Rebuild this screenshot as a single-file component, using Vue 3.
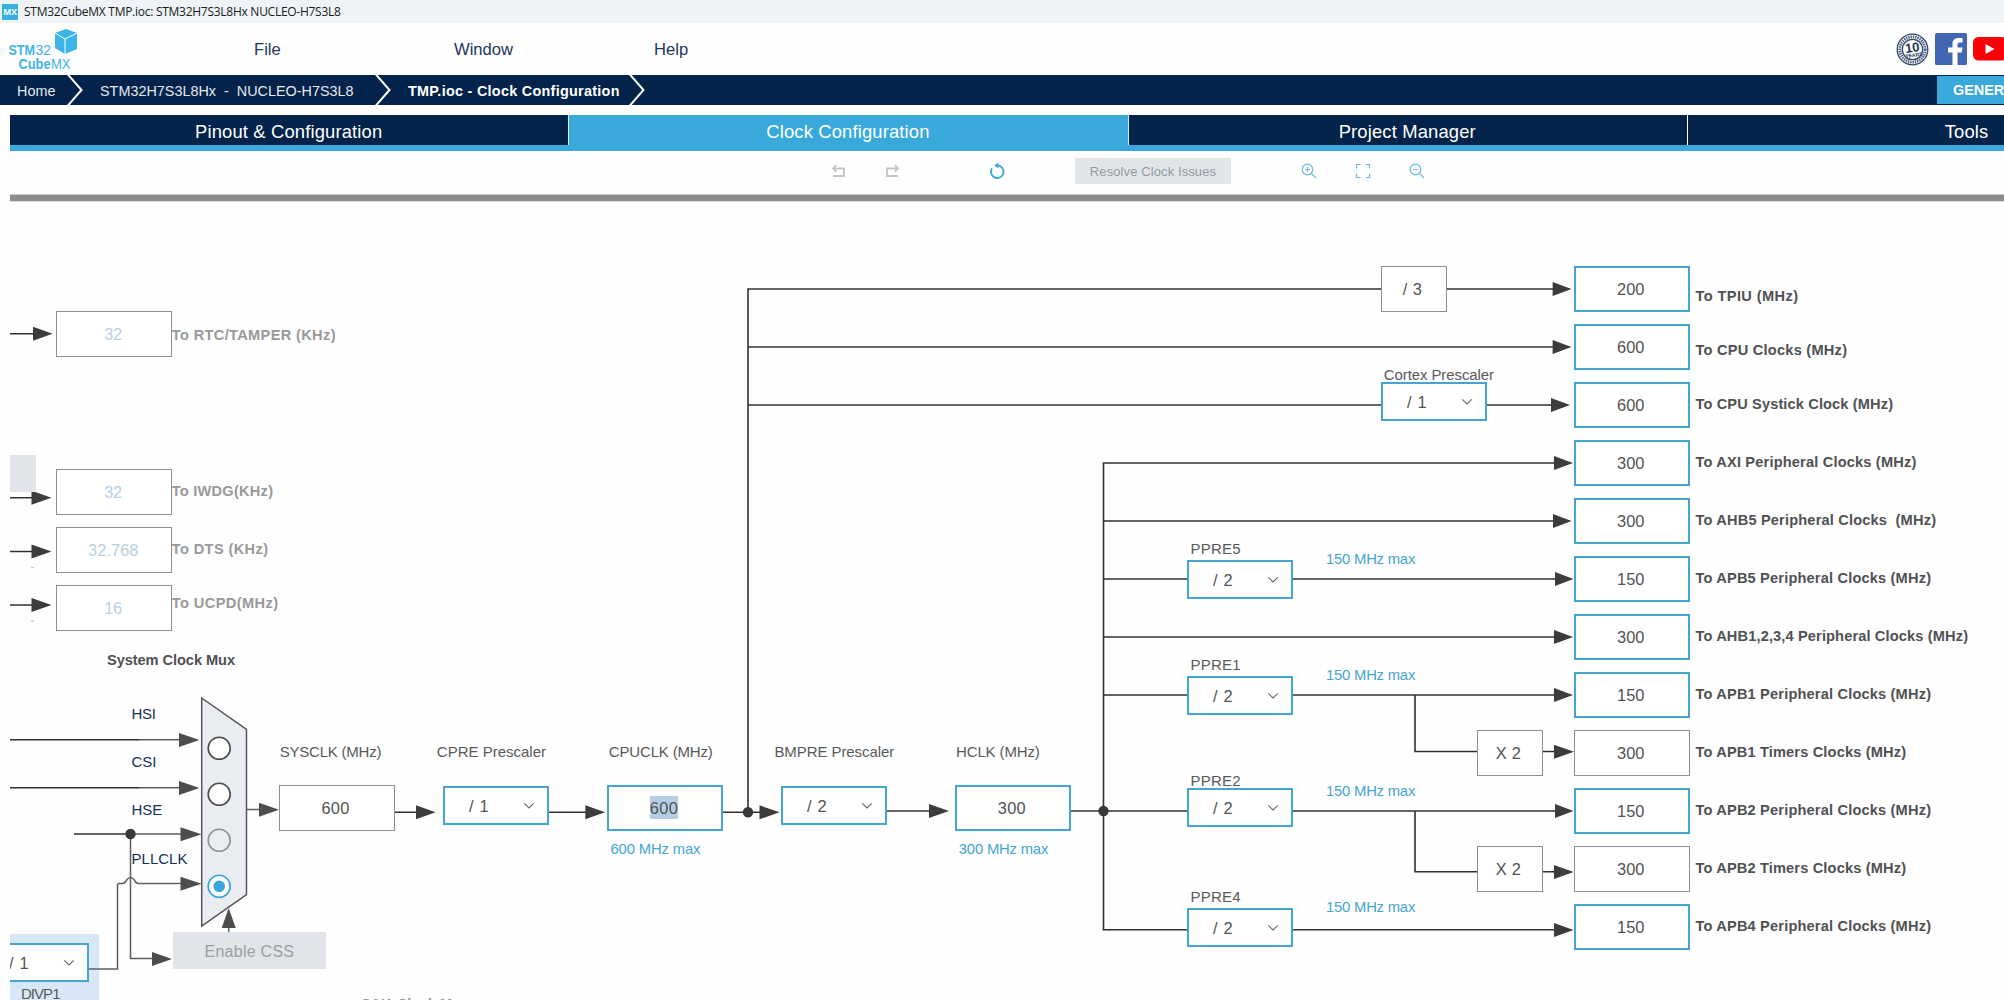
<script setup>
const tabs = [
  { name: 'Pinout & Configuration' },
  { name: 'Clock Configuration', active: true },
  { name: 'Project Manager' },
  { name: 'Tools' },
]

// Value fields: x, y, text, state, baseline offset
const outputs = [
  ['200', 266, 'on'], ['600', 324, 'on'], ['600', 382, 'on'], ['300', 440, 'on'],
  ['300', 498, 'on'], ['150', 556, 'on'], ['300', 614, 'on'], ['150', 672, 'on'],
  ['300', 730, 'off'], ['150', 788, 'on'], ['300', 846, 'off'], ['150', 904, 'on'],
].map(([text, y, kind]) => ({ text, y, kind, x: 1574, w: 116, tw: 27.4, tx: 1630.7, by: y + 29.4 }))

const fields = [
  { x: 56, y: 311, w: 116, text: '32', tx: 113.2, by: 340, tw: 18, kind: 'off', dim: true },
  { x: 56, y: 469, w: 116, text: '32', tx: 113.2, by: 498, tw: 18, kind: 'off', dim: true },
  { x: 56, y: 527, w: 116, text: '32.768', tx: 113.2, by: 556, tw: 50.5, kind: 'off', dim: true },
  { x: 56, y: 585, w: 116, text: '16', tx: 113.2, by: 614, tw: 18, kind: 'off', dim: true },
  { x: 279, y: 785, w: 116, text: '600', tx: 335.4, by: 813.7, tw: 28, kind: 'off' },
  { x: 607, y: 785, w: 116, text: '600', tx: 663.8, by: 813.7, tw: 28, kind: 'on', selected: true },
  { x: 955, y: 785, w: 116, text: '300', tx: 1011.7, by: 813.8, tw: 28, kind: 'on' },
  { x: 1381, y: 266, w: 66, text: '/ 3', tx: 1412.3, by: 295.3, tw: 19, kind: 'off' },
  { x: 1477, y: 730, w: 66, text: 'X 2', tx: 1508.3, by: 759, tw: 25, kind: 'off' },
  { x: 1477, y: 846, w: 66, text: 'X 2', tx: 1508.3, by: 875, tw: 25, kind: 'off' },
  ...outputs,
]

const selects = [
  { x: 443, y: 786, text: '/ 1' },
  { x: 781, y: 786, text: '/ 2' },
  { x: 1381, y: 382, text: '/ 1' },
  { x: 1187, y: 560, text: '/ 2' },
  { x: 1187, y: 676, text: '/ 2' },
  { x: 1187, y: 788, text: '/ 2' },
  { x: 1187, y: 908, text: '/ 2' },
  { x: -17, y: 943, text: '/ 1' },
]

// Labels: text, left, right, baseline, style
const labels = [
  ['To RTC/TAMPER (KHz)', 171.8, 335.5, 340.3, 'bold dim'],
  ['To IWDG(KHz)', 171.8, 273, 496.2, 'bold dim'],
  ['To DTS (KHz)', 171.8, 268, 554.3, 'bold dim'],
  ['To UCPD(MHz)', 171.8, 278, 608.2, 'bold dim'],
  ['System Clock Mux', 107, 235, 665.3, 'bold'],
  ['HSI', 131.5, 156, 719, 'navy'],
  ['CSI', 131.5, 156.5, 767, 'navy'],
  ['HSE', 131.5, 162.3, 815, 'navy'],
  ['PLLCLK', 131.5, 187.5, 863.8, 'navy'],
  ['SYSCLK (MHz)', 279.7, 381.5, 757, ''],
  ['CPRE Prescaler', 436.8, 546, 757, ''],
  ['CPUCLK (MHz)', 608.8, 712.8, 757, ''],
  ['BMPRE Prescaler', 774.4, 894.2, 757, ''],
  ['HCLK (MHz)', 956, 1039.8, 757, ''],
  ['600 MHz max', 610.5, 700.5, 854, 'blue'],
  ['300 MHz max', 958.8, 1048.3, 854, 'blue'],
  ['Cortex Prescaler', 1383.8, 1494, 380, ''],
  ['PPRE5', 1190.5, 1240.5, 554.3, ''],
  ['PPRE1', 1190.5, 1240.5, 670.3, ''],
  ['PPRE2', 1190.5, 1240.5, 786.3, ''],
  ['PPRE4', 1190.5, 1240.5, 902.3, ''],
  ['150 MHz max', 1326, 1415.3, 564.4, 'blue'],
  ['150 MHz max', 1326, 1415.3, 680.4, 'blue'],
  ['150 MHz max', 1326, 1415.3, 796.4, 'blue'],
  ['150 MHz max', 1326, 1415.3, 912.4, 'blue'],
  ['To TPIU (MHz)', 1695.5, 1798, 301.3, 'bold'],
  ['To CPU Clocks (MHz)', 1695.5, 1847, 355.3, 'bold'],
  ['To CPU Systick Clock (MHz)', 1695.5, 1893, 409.3, 'bold'],
  ['To AXI Peripheral Clocks (MHz)', 1695.5, 1916.3, 467.3, 'bold'],
  ['To AHB5 Peripheral Clocks\u00a0 (MHz)', 1695.5, 1936, 525.3, 'bold'],
  ['To APB5 Peripheral Clocks (MHz)', 1695.5, 1931, 583.3, 'bold'],
  ['To AHB1,2,3,4 Peripheral Clocks (MHz)', 1695.5, 1968, 641.3, 'bold'],
  ['To APB1 Peripheral Clocks (MHz)', 1695.5, 1931, 699.3, 'bold'],
  ['To APB1 Timers Clocks (MHz)', 1695.5, 1906, 757.3, 'bold'],
  ['To APB2 Peripheral Clocks (MHz)', 1695.5, 1931, 815.3, 'bold'],
  ['To APB2 Timers Clocks (MHz)', 1695.5, 1906, 873.3, 'bold'],
  ['To APB4 Peripheral Clocks (MHz)', 1695.5, 1931, 931.3, 'bold'],
  ['DIVP1', 21, 60.5, 998.5, ''],
  ['SAI1 Clock Mux', 361, 469, 1008.7, 'bold dim'],
]

// Right-pointing arrow heads: base x, y, tip x
const heads = [
  [33, 333.7, 52.5], [31.5, 497.7, 51.5], [31.5, 551.5, 51.5], [31.5, 605, 51.5],
  [416, 812.3, 435.5], [585.3, 812.3, 605], [759.5, 812.3, 779.5], [929, 811, 949],
  [1552.6, 289, 1571.5], [1552.6, 347, 1571.5], [1551, 405, 1570],
  [1554, 463, 1573], [1553, 521, 1571.5], [1555, 579, 1573.5], [1554, 637, 1573],
  [1554, 695, 1573], [1554, 751.7, 1574], [1555, 811, 1573.5], [1554, 872, 1573.5], [1554, 930, 1573.5],
]
const greyHeads = [
  [179, 740, 199.5], [179, 788, 199.5], [180.5, 834.3, 201.5], [180.5, 883.7, 201.5],
  [259, 809.7, 279], [152, 959, 172],
]
const headPoints = ([x, y, tip]) => `${x},${y - 7} ${tip},${y} ${x},${y + 7}`
</script>

<template>
  <div class="app">
    <header class="titlebar">
      <span class="mx">MX</span>
      <span class="title">STM32CubeMX TMP.ioc: STM32H7S3L8Hx NUCLEO-H7S3L8</span>
    </header>

    <nav class="menu">
      <svg class="logo" width="84" height="52" viewBox="0 0 84 52">
        <path class="cube" d="M66 6 L77 10 V26 L65 31 L55 25 V10 Z" />
        <path class="cube-edge" d="M55 10 L65 16 L77 10 M65 16 V31" />
        <text x="8.500" y="31.500" class="lb" textLength="26.500" lengthAdjust="spacingAndGlyphs">STM</text>
        <text x="35.500" y="31.500" class="ln" textLength="15.500" lengthAdjust="spacingAndGlyphs">32</text>
        <text x="18.500" y="46" class="lb" textLength="32" lengthAdjust="spacingAndGlyphs">Cube</text>
        <text x="51" y="46" class="ln" textLength="19.500" lengthAdjust="spacingAndGlyphs">MX</text>
      </svg>
      <span class="item file">File</span>
      <span class="item window">Window</span>
      <span class="item help">Help</span>
      <div class="social">
        <svg width="33" height="33" viewBox="0 0 33 33">
          <circle cx="16.500" cy="16.500" r="15.300" class="ring" />
          <circle cx="16.500" cy="16.500" r="12.700" class="ring-dash" />
          <circle cx="16.500" cy="16.500" r="10.200" class="ring" />
          <text x="16.500" y="19" class="ten" text-anchor="middle" transform="rotate(-8 16.500 16.500)">10</text>
          <text x="17" y="24" class="years" text-anchor="middle" transform="rotate(-8 16.500 16.500)">YEARS</text>
        </svg>
        <svg width="32" height="32" viewBox="0 0 32 32">
          <rect width="32" height="32" rx="1.500" fill="#4267b2" />
          <path fill="#fff" d="M17.500 32 V19.500 H13 V14.500 H17.500 V11 C17.500 7 20 5 23.500 5 H27.500 V9.500 H25 C23 9.500 22.500 10.500 22.500 12 V14.500 H27.500 L26.800 19.500 H22.500 V32 Z" />
        </svg>
        <svg width="34" height="24" viewBox="0 0 34 24">
          <rect width="34" height="23.500" rx="5.500" fill="#fb0007" />
          <path fill="#fff" d="M12.500 7 L21.500 12 L12.500 17 Z" />
        </svg>
      </div>
    </nav>

    <div class="crumbs">
      <span class="crumb home">Home</span>
      <svg class="sep" width="18" height="30" viewBox="0 0 18 30"><path d="M1.500 -1 L15.500 15 L1.500 31" /></svg>
      <span class="crumb board">STM32H7S3L8Hx&nbsp; -&nbsp; NUCLEO-H7S3L8</span>
      <svg class="sep" width="18" height="30" viewBox="0 0 18 30"><path d="M1.500 -1 L15.500 15 L1.500 31" /></svg>
      <span class="crumb current">TMP.ioc - Clock Configuration</span>
      <svg class="sep" width="18" height="30" viewBox="0 0 18 30"><path d="M1.500 -1 L15.500 15 L1.500 31" /></svg>
      <div class="generate">GENERATE CODE</div>
    </div>

    <div class="tabs">
      <div v-for="t in tabs" :key="t.name" class="tab" :class="{ active: t.active }">{{ t.name }}</div>
    </div>

    <div class="toolbar">
      <svg class="tool grey undo" width="14" height="14" viewBox="0 0 14 14"><path d="M1 4.500 H12 V12 H1 M4.200 1.200 L1 4.500 L4.200 7.800" /></svg>
      <svg class="tool grey redo" width="14" height="14" viewBox="0 0 14 14"><path d="M13 4.500 H2 V12 H13 M9.800 1.200 L13 4.500 L9.800 7.800" /></svg>
      <svg class="tool refresh" width="16" height="18" viewBox="0 0 16 18"><path d="M2 6.200 A6.300 6.300 0 1 0 7 3.400 H5" /><path class="tip" d="M4.600 3.400 L8.300 0.600 V6.200 Z" /></svg>
      <div class="resolve">Resolve Clock Issues</div>
      <svg class="tool thin zin" width="16" height="16" viewBox="0 0 16 16"><circle cx="6.500" cy="6.500" r="5.300" /><path d="M10.300 10.300 L15 15 M4 6.500 H9 M6.500 4 V9" /></svg>
      <svg class="tool thin fit" width="16" height="16" viewBox="0 0 16 16"><path d="M1.500 5.500 V1.500 H5.500 M10.500 1.500 H14.500 V5.500 M14.500 10.500 V14.500 H10.500 M5.500 14.500 H1.500 V10.500" /></svg>
      <svg class="tool thin zout" width="16" height="16" viewBox="0 0 16 16"><circle cx="6.500" cy="6.500" r="5.300" /><path d="M10.300 10.300 L15 15 M4 6.500 H9" /></svg>
    </div>

    <main class="canvas">
      <svg width="2004" height="798" viewBox="0 202 2004 798">
        <rect class="panel" x="10" y="934" width="89" height="70" />

        <!-- wires -->
        <g class="wire">
          <path d="M10 333.700 H36 M10 497.700 H36 M10 551.500 H36 M10 605 H36" />
          <path d="M10 739.700 H139 M10 787.700 H139 M74 834 H131" />
          <path d="M395 812.300 H420 M549 812.300 H590 M723 812.300 H762 M887 811 H932" />
          <path d="M748 812 V289 H1381 M1447 289 H1556 M748 347 H1556 M748 405 H1381 M1487 405 H1555" />
          <path d="M1071 811 H1187 M1293 811 H1558" />
          <path d="M1103.500 930 V463 H1557 M1103.500 521 H1556 M1103.500 579 H1187 M1293 579 H1558 M1103.500 637 H1557" />
          <path d="M1103.500 695 H1187 M1293 695 H1557 M1102.700 929.700 H1187 M1293 929.700 H1557" />
          <path d="M1415 695 V751.500 H1477 M1543 751.500 H1557 M1415 811 V871.800 H1477 M1543 871.800 H1557" />
        </g>
        <g class="wire soft">
          <path d="M139 739.700 H183 M139 787.700 H183 M131 834 H184 M130.500 834 V958.500 H156" />
          <path d="M89 969 H117.500 V884.500 L119 883.500 H123 Q126 882.500 127 879.500 Q130.500 876 134 879.500 Q135 882.500 138 883.500 H184" />
          <path d="M246.500 809.500 H263 M228.700 932 V924" />
        </g>
        <polygon v-for="(h, i) in heads" :key="'h' + i" class="head" :points="headPoints(h)" />
        <polygon v-for="(h, i) in greyHeads" :key="'g' + i" class="head soft" :points="headPoints(h)" />
        <polygon class="head soft" points="221.700,928 228.700,908 235.700,928" />
        <circle class="dot" cx="130.500" cy="834" r="5.200" />
        <circle class="dot" cx="748" cy="812.300" r="5.200" />
        <circle class="dot" cx="1103.500" cy="811" r="5.200" />
        <path class="speck" d="M31 567.500 h3 M31 621 h3" />

        <!-- disabled buttons -->
        <rect class="disabled" x="10" y="455" width="26" height="37" />
        <rect class="disabled" x="173" y="932" width="153" height="37" />
        <text class="disabled-text" x="204.500" y="957" textLength="89.500">Enable CSS</text>

        <!-- system clock mux -->
        <polygon class="mux" points="201.700,698 246.500,729.500 246.500,894.500 201.700,926" />
        <circle class="radio" cx="219.200" cy="748.300" r="11" />
        <circle class="radio" cx="219.200" cy="794.300" r="11" />
        <circle class="radio muted" cx="219.200" cy="840.300" r="11" />
        <circle class="radio picked" cx="219.200" cy="886.300" r="11" />
        <circle class="pick" cx="219.200" cy="886.300" r="5.800" />

        <!-- value fields -->
        <g v-for="(f, i) in fields" :key="'f' + i">
          <rect v-if="f.kind === 'on'" class="box on" :x="f.x + 1" :y="f.y + 1" :width="f.w - 2" height="44" />
          <rect v-else class="box off" :x="f.x + 0.5" :y="f.y + 0.5" :width="f.w - 1" height="45" />
          <rect v-if="f.selected" class="selection" x="650" y="796" width="28" height="23" />
          <text class="value" :class="{ dim: f.dim }" :x="f.tx - f.tw / 2" :y="f.by" :textLength="f.tw">{{ f.text }}</text>
        </g>

        <!-- prescaler selects -->
        <g v-for="(s, i) in selects" :key="'s' + i">
          <rect class="box on" :x="s.x + 1" :y="s.y + 1" width="104" height="37" />
          <text class="value" :x="s.x + 26" :y="s.y + 25.700" textLength="19.500">{{ s.text }}</text>
          <path class="chevron" :d="`M${s.x + 81.300} ${s.y + 17.300} l4.700 4.700 l4.700 -4.700`" />
        </g>
        <rect class="margin" x="0" y="930" width="10" height="70" />

        <text v-for="(l, i) in labels" :key="'l' + i" class="label" :class="l[4]" :x="l[1]" :y="l[3]" :textLength="l[2] - l[1]">{{ l[0] }}</text>
      </svg>
    </main>
  </div>
</template>

<style>
body { margin: 0; overflow: hidden; background: #fff; }
</style>

<style scoped>
.app { width: 2004px; height: 1000px; overflow: hidden; background: #fefefe; font-family: "Liberation Sans", Arial, sans-serif; }

.titlebar { height: 23px; background: #eff3f7; display: flex; align-items: center; }
.mx { width: 16px; height: 16px; margin-left: 2px; background: #35b0e0; color: #fff; font: bold 8.5px/16px "Open Sans", sans-serif; text-align: center; }
.title { margin-left: 6px; color: #1a1a1a; font: 12px/22px "Open Sans", "Noto Sans", sans-serif; white-space: nowrap; letter-spacing: -0.27px; }

.menu { height: 52px; display: flex; align-items: center; }
.logo { flex: none; }
.cube { fill: #3cb4e6; }
.cube-edge { fill: none; stroke: #fff; stroke-width: 1; }
.lb { font: bold 15px "Liberation Sans", Arial, sans-serif; fill: #3cb4e6; }
.ln { font: 15px "Liberation Sans", Arial, sans-serif; fill: #3cb4e6; }
.item { font-size: 16.6px; color: #23355f; padding-top: 2px; }
.file { margin-left: 170px; width: 200px; }
.window { width: 200px; }
.social { margin-left: auto; display: flex; align-items: center; gap: 6px; height: 52px; margin-right: -3px; }
.ring { fill: none; stroke: #33496d; stroke-width: 1.3; }
.ring-dash { fill: none; stroke: #4c5f7f; stroke-width: 2.8; stroke-dasharray: 1.4 0.9; }
.ten { font: bold 13px "Liberation Sans", Arial, sans-serif; fill: #1e3358; }
.years { font: bold 5px "Liberation Sans", Arial, sans-serif; fill: #1e3358; }

.crumbs { height: 30px; background: #03234b; display: flex; align-items: center; color: #fff; white-space: nowrap; }
.crumb { font-size: 14.4px; color: #e4e9f0; padding-top: 1px; }
.home { margin-left: 17px; width: 49px; }
.board { margin-left: 16px; width: 274px; }
.current { margin-left: 16px; width: 220px; font-weight: bold; color: #fff; letter-spacing: 0.28px; }
.sep { flex: none; fill: none; stroke: #fff; stroke-width: 2; }
.generate { margin-left: auto; flex: none; width: 51px; height: 28px; padding-left: 16px; overflow: hidden; background: #39a9dc; font: bold 14.4px/29px "Liberation Sans", Arial, sans-serif; }

.tabs { margin: 10px 0 0 10px; height: 30px; border-bottom: 6px solid #39a9dc; display: flex; overflow: hidden; }
.tab { flex: none; box-sizing: border-box; width: 559.3px; height: 30px; padding-right: 1px; border-right: 1.4px solid #fff; background: #03234b; color: #fff; font-size: 18.4px; line-height: 33px; letter-spacing: 0.15px; text-align: center; }
.tab:first-child { border-right-color: #d8ecf7; }
.tab.active { background: #39a9dc; border-right-color: #d8ecf7; }

.toolbar { height: 44px; margin-left: 10px; border-bottom: 6px solid #8d8d8d; box-shadow: inset 0 -1px 0 #c9c9c9, 0 1px 0 #dcdcdc; display: flex; align-items: flex-start; }
.tool { flex: none; fill: none; stroke: #39a9dc; stroke-width: 1.8; }
.grey { stroke: #c4c4c4; }
.thin { stroke: #6cbbe2; stroke-width: 1.2; margin-top: 12px; }
.tip { fill: #39a9dc; stroke: none; }
.undo { margin: 13px 0 0 822px; }
.redo { margin: 13px 0 0 39px; }
.refresh { margin: 11px 0 0 91px; }
.resolve { margin: 7px 0 0 69px; width: 156px; height: 26px; background: #e1e5e9; color: #959a9e; font-size: 13px; line-height: 27px; text-align: center; letter-spacing: 0.1px; }
.zin { margin-left: 70px; }
.fit { margin-left: 38px; }
.zout { margin-left: 38px; }

.canvas { height: 799px; overflow: hidden; }
.canvas svg { display: block; margin-top: 1px; }
.panel { fill: #d8e7f5; }
.wire { fill: none; stroke: #303030; stroke-width: 1.6; }
.wire.soft { stroke: #5c5f60; stroke-width: 1.5; }
.head { fill: #3c3c3c; }
.head.soft { fill: #4c4e4e; }
.dot { fill: #383838; }
.speck { stroke: #ccc; stroke-width: 1.5; }
.disabled { fill: #e1e5e9; }
.disabled-text { font-size: 16px; fill: #9a9ea2; }
.mux { fill: #e9edf2; stroke: #555; stroke-width: 1.5; }
.radio { fill: #fff; stroke: #4a4a4a; stroke-width: 1.6; }
.radio.muted { fill: #eaeef1; stroke: #909294; }
.radio.picked { stroke: #39a4d6; }
.pick { fill: #39a4d6; }
.box { fill: #fff; }
.box.on { stroke: #45a5d0; stroke-width: 2; }
.box.off { stroke: #8f8f8f; stroke-width: 1; }
.selection { fill: #b5cce5; }
.value { font-size: 16.4px; fill: #525252; white-space: pre; }
.value.dim { fill: #b8cfe5; }
.chevron { fill: none; stroke: #666; stroke-width: 1.1; }
.margin { fill: #fefefe; }
.label { font-size: 15px; fill: #58595b; }
.label.bold { font-size: 14.6px; font-weight: bold; fill: #505153; }
.label.bold.dim { fill: #999; }
.label.navy { fill: #14305a; }
.label.blue { font-size: 14.8px; fill: #42a5d3; }
</style>
